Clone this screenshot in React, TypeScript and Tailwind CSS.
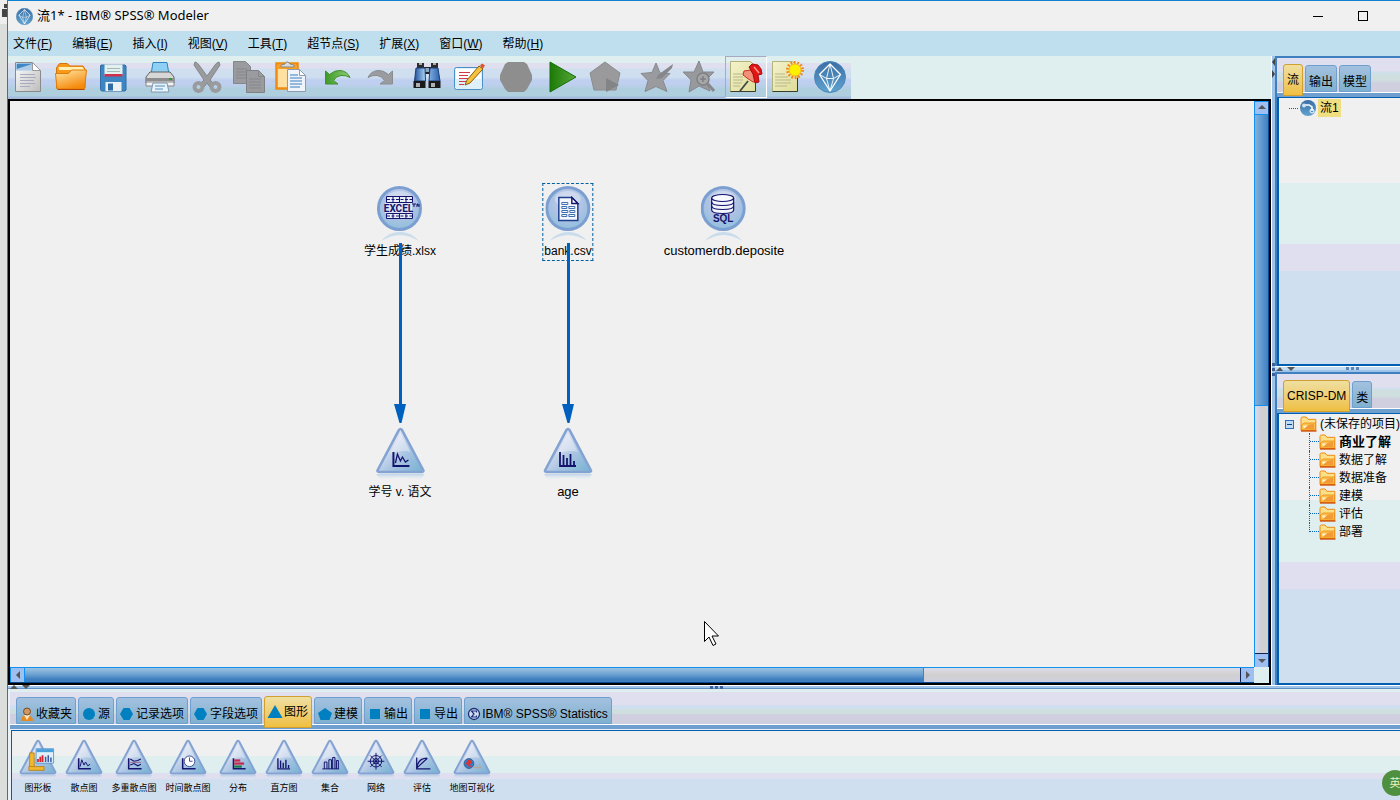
import React, { useState } from "react";
import clsx from "clsx";

const menus = [
  { label: "文件", key: "F" },
  { label: "编辑", key: "E" },
  { label: "插入", key: "I" },
  { label: "视图", key: "V" },
  { label: "工具", key: "T" },
  { label: "超节点", key: "S" },
  { label: "扩展", key: "X" },
  { label: "窗口", key: "W" },
  { label: "帮助", key: "H" },
];

/* ---------- gradients shared by every icon ---------- */

function IconDefs() {
  return (
    <svg width="0" height="0" className="absolute" aria-hidden="true">
      <defs>
        <linearGradient id="tri" x1="0" y1="0" x2="1" y2="1">
          <stop offset="0.2" stopColor="#eceaf6" />
          <stop offset="0.6" stopColor="#a9c4e2" />
          <stop offset="1" stopColor="#74b0d2" />
        </linearGradient>
        <radialGradient id="ball" cx="0.5" cy="0.35" r="0.6">
          <stop offset="0" stopColor="#cdd0ea" />
          <stop offset="0.7" stopColor="#a9c1e2" />
          <stop offset="1" stopColor="#96c0de" />
        </radialGradient>
        <linearGradient id="fade" x1="0" y1="0" x2="0" y2="1">
          <stop offset="0" stopColor="#a8c8e4" stopOpacity="0.7" />
          <stop offset="1" stopColor="#ffffff" stopOpacity="0" />
        </linearGradient>
        <linearGradient id="gem" x1="0" y1="0" x2="0" y2="1">
          <stop offset="0" stopColor="#3a6ea5" />
          <stop offset="1" stopColor="#5fa3d0" />
        </linearGradient>
        <linearGradient id="orange" x1="0" y1="0" x2="0.5" y2="1">
          <stop offset="0" stopColor="#ffe9a8" />
          <stop offset="1" stopColor="#f58a0c" />
        </linearGradient>
        <linearGradient id="sheet" x1="0" y1="0" x2="1" y2="1">
          <stop offset="0" stopColor="#ffffff" />
          <stop offset="1" stopColor="#bcbcbc" />
        </linearGradient>
        <linearGradient id="note" x1="0" y1="0" x2="1" y2="1">
          <stop offset="0" stopColor="#f4f3cc" />
          <stop offset="1" stopColor="#dedc98" />
        </linearGradient>
        <linearGradient id="play" x1="0" y1="0" x2="1" y2="0">
          <stop offset="0" stopColor="#1c7a06" />
          <stop offset="1" stopColor="#56a838" />
        </linearGradient>
        <linearGradient id="leaf" x1="0" y1="0" x2="1" y2="0">
          <stop offset="0" stopColor="#3f9a26" />
          <stop offset="1" stopColor="#8ccc74" />
        </linearGradient>
        <linearGradient id="tube" x1="0" y1="0" x2="1" y2="0">
          <stop offset="0" stopColor="#1f4e96" />
          <stop offset="0.4" stopColor="#a4cdf4" />
          <stop offset="1" stopColor="#2b62ae" />
        </linearGradient>
      </defs>
    </svg>
  );
}

function GemIcon({ size }: { size: number }) {
  return (
    <svg width={size} height={size} viewBox="0 0 32 32" fill="none" stroke="#fff" strokeWidth="1.3">
      <circle cx="16" cy="16" r="15.5" fill="url(#gem)" stroke="#4d86ba" strokeWidth="1" />
      <path d="M16 3 5.500 13.500 16 30 26.500 13.500z" strokeLinejoin="round" />
      <path d="M5.500 13.500 12.500 17.500 19.500 17.500 26.500 13.500M16 3 12.500 17.500 16 30 19.500 17.500 16 3" strokeWidth="0.900" />
    </svg>
  );
}

function FolderIcon() {
  return (
    <svg width="17" height="16" viewBox="0 0 17 16" className="shrink-0">
      <path d="M1 14.500V2.500Q1 1 2.500 1h3.500l2 2.300h7.800v11.200z" fill="#fbe08a" stroke="#ee8a12" />
      <path d="M4 7h11.500v7H1.500V9z" fill="#f9c04c" stroke="#ef8c10" strokeWidth="0.800" />
      <path d="M4 13q3-5 10-5v5z" fill="#f08a2c" opacity="0.700" />
      <path d="M3 9.500h5l-4 3z" fill="#fff3c8" />
      <path d="M1 15h15.500" stroke="#cc4a06" strokeWidth="1.300" />
    </svg>
  );
}

const gray = "#999b9e";

const tools: Record<string, React.ReactNode> = {
  新建: (
    <>
      <path d="M2.500 1.500h17l8 8v21h-25z" fill="url(#sheet)" stroke="#8a8a8a" />
      <path d="M3.500 2.500h15.500v7H3.500z" fill="#3f86c6" />
      <path d="M3.500 8 19 3v7H3.500z" fill="#dceaf6" opacity="0.7" />
      <path d="M19.500 1.500v8h8z" fill="#fff" stroke="#999" />
      <path d="M7 13.500h15M7 16.500h16M7 19.500h14M7 22.500h15M7 25.500h10" stroke="#a9a9bf" />
    </>
  ),
  打开: (
    <>
      <path d="M1.500 27V7l2-3.500L5 2.500h7l3 2.500h13l2 3v19z" fill="#f79a1c" stroke="#d97208" />
      <path d="M3.500 6h24l2 3H4z" fill="#fff1b4" />
      <path d="M.500 12.500h13l3-3.500h15l-2 19H2z" fill="url(#orange)" stroke="#e07c08" />
      <path d="M2.500 28.500h27" stroke="#b84c05" />
    </>
  ),
  保存: (
    <>
      <path d="M4 4h24l1 1v24l-1 1H4.500L3.500 28.500V5z" fill="#3e86c2" stroke="#2f6ca4" />
      <path d="M7.500 3.500h18v11h-18z" fill="#e4f0ee" />
      <path d="M10 7.500h13M10 10.500h13" stroke="#9fbcb8" />
      <path d="M7.500 13h18v2.500h-18z" fill="#d0304c" />
      <path d="M8.500 21h16v9h-16z" fill="#eef1f4" />
      <path d="M11 22.500h5v7h-5z" fill="#2f6ca4" />
    </>
  ),
  打印: (
    <>
      <path d="M9 1.500h14l2 12H7z" fill="#8fd0f4" stroke="#2f84c0" />
      <path d="M6 11h20l4 5v6H2v-6z" fill="#d7d7d7" stroke="#606060" />
      <path d="M2 17h28v3H2z" fill="#8c8c8c" />
      <path d="M2 21h28v4H2z" fill="#f2f2f2" stroke="#888" />
      <path d="M9 22h14l2 9H7z" fill="#e9f3fb" stroke="#7d98ae" />
      <path d="M11 25h10M11 28h8" stroke="#4d8fc0" />
      <path d="M25 18h3" stroke="#2ca02c" strokeWidth="2" />
    </>
  ),
  剪切: (
    <>
      <path d="M4 1q2 0 4 3l8 11 8-11q2-3 4-3l1 3-10 15 4 4-4 3-3-4-3 4-4-3 4-4L3 4z" fill={gray} stroke="#85878a" />
      <ellipse cx="7.500" cy="26" rx="4" ry="4" fill="none" stroke={gray} strokeWidth="4" />
      <ellipse cx="24.500" cy="26" rx="4" ry="4" fill="none" stroke={gray} strokeWidth="4" />
    </>
  ),
  复制: (
    <>
      <path d="M.500.500h12l5 5v17H.500z" fill={gray} stroke="#85878a" />
      <path d="M3 8h11M3 11h11M3 14h11M3 17h10" stroke="#85878a" />
      <path d="M13.500 9.500h12l6 6v16h-18z" fill={gray} stroke="#808285" />
      <path d="M25.500 9.500v6h6M16 18h12M16 21h12M16 24h12M16 27h12" stroke="#85878a" fill="none" />
    </>
  ),
  粘贴: (
    <>
      <path d="M1.500 2.500h21v25h-21z" fill="#ffe0a0" stroke="#f08a10" strokeWidth="2.500" />
      <path d="M3 4h18v4H3z" fill="#f8a01e" />
      <path d="M6 6V4l4-1q1-3 3-2l2 2 4 1v2z" fill="#d8dadc" stroke="#888" />
      <path d="M12.500 8.500h12l6 6v16h-18z" fill="#eef4fa" stroke="#8b9bb0" />
      <path d="M24.500 8.500v6h6z" fill="#fff" stroke="#8b9bb0" />
      <path d="M15 14h8M15 17h12M15 20h12M15 23h12M15 26h10" stroke="#3a7ec0" />
    </>
  ),
  撤销: <path d="M3.500 10v13H16l-4.500-3.500Q14 15 19 14.500t9 2Q25 10 18 9.500q-5-.500-10.500 4z" fill="url(#leaf)" stroke="#3f8f2c" />,
  重做: <path d="M28.500 10v13H16l4.500-3.500Q18 15 13 14.500t-9 2Q7 10 14 9.500q5-.500 10.500 4z" fill={gray} stroke="#8a8c8f" />,
  查找: (
    <>
      <path d="M12 6h8v7h-8z" fill="#222" />
      <path d="M14 7h4v4h-4z" fill="#8fa6bf" />
      <path d="M6 2h7v5H6zM20 2h7v5h-7z" fill="#2c2c2c" />
      <path d="M5 7h9l.5 13H3.500zM19 7h8l2 13H18z" fill="url(#tube)" stroke="#1b3f78" />
      <path d="M2.500 20h12v7h-12zM17.500 20h12v7h-12z" fill="#1a1a1a" />
      <path d="M5 22h4v4H5zM20 22h4v4h-4z" fill="#b0b0b0" />
      <path d="M8 3h3M22 3h3" stroke="#aaa" strokeWidth="2" />
    </>
  ),
  编辑注释: (
    <>
      <rect x="1.500" y="6.500" width="28" height="22" rx="2" fill="#e0f0f8" stroke="#4a90c4" />
      <path d="M3 8h25v10H3z" fill="#fff" />
      <path d="M6 11.500h11M6 14.500h9M6 17.500h9M6 20.500h7M6 23.500h5" stroke="#d03a4a" strokeWidth="1.200" />
      <path d="m14 19 12-14 4 3-13 14-5 2z" fill="#f6c23c" stroke="#8a5a12" />
      <path d="m27 4.500 2-2 3 2-2 3z" fill="#d9532c" />
    </>
  ),
  停止: <path d="M8 1h16l3 2 5 11v5l-5 9-3 3H8l-3-3-5-9v-5L5 3z" fill="#8e8e8e" />,
  运行: <path d="M3 1v30l26-15z" fill="url(#play)" stroke="#16700a" />,
  运行选定: (
    <>
      <path d="m16 1 15 11-4 17H5L1 12z" fill="#9a9a9c" stroke="#8a8c8e" />
      <path d="M17 17v14l13-7z" fill="#828486" />
    </>
  ),
  星标: (
    <>
      <path d="m15 2 4 10 10 .5-7 7 4 11-11-5-11 5 3-11-7-7 11-1z" fill={gray} stroke="#87898c" />
      <path d="M32 3 17 14l-2 4 6-1L31 7z" fill="#85878a" />
    </>
  ),
  查找星标: (
    <>
      <path d="m16 0 4 11h11l-8 8 4 11-11-5-10 6 2-12-8-8h11z" fill="#98999c" stroke="#86888b" />
      <circle cx="20" cy="18" r="6" fill="#a5a6a8" stroke="#7e8083" strokeWidth="1.500" />
      <path d="M17 18h6M20 15v6" stroke="#7e8083" strokeWidth="1.500" />
      <path d="m24 22 7 8" stroke="#85878a" strokeWidth="3" />
    </>
  ),
  显示注释: (
    <>
      <path d="M.500.500h20l5 5v25H.500z" fill="url(#note)" stroke="#b3b17c" />
      <path d="M25.500 20v10.500H.500" fill="none" stroke="#3d3d2c" />
      <path d="M3 13h11M3 16h10M3 19h10M3 22h9M3 25h7" stroke="#b9b78a" />
      <path d="M18 20 10 30" stroke="#444" strokeWidth="1.800" />
      <path d="m14 10 7-1 4 5 2 6-4 1-6-4-4-3z" fill="#f2907a" stroke="#c83020" />
      <path d="m22 3 6 1 3 4 1 5-4 1 1 7-4 1-2-9-4-7z" fill="#e31616" stroke="#a80d0d" />
      <path d="m24 6 5 6" stroke="#ff9a8a" strokeWidth="1.500" />
    </>
  ),
  插入注释: (
    <>
      <path d="M.500.500h20l5 5v25H.500z" fill="url(#note)" stroke="#b3b17c" />
      <path d="M25.500 17v13.500H.500" fill="none" stroke="#3d3d2c" />
      <path d="M3 13h10M3 16h13M3 19h16M3 22h16M3 25h12" stroke="#b9b78a" />
      <circle cx="23" cy="9" r="7.500" fill="none" stroke="#f08a1c" strokeWidth="3" strokeDasharray="1.800 1.600" />
      <circle cx="23" cy="9" r="6" fill="#fff000" stroke="#f4b81c" />
    </>
  ),
};

// toolbar buttons in the order they appear, one array per group
const toolGroups: string[][] = [
  ["新建", "打开", "保存"],
  ["打印"],
  ["剪切", "复制", "粘贴"],
  ["撤销", "重做"],
  ["查找", "编辑注释"],
  ["停止"],
  ["运行", "运行选定"],
  ["星标", "查找星标"],
  ["显示注释", "插入注释", "Modeler"],
];

/* ---------- node glyphs, drawn in the 50x56 triangle box ---------- */

const navy = "#14146e";

const glyphs: Record<string, React.ReactNode> = {
  board: (
    <>
      <path d="M14 18h6v22h-6z" fill="#f0b82c" stroke="#b9780c" />
      <path d="M13 36h20v5H13z" fill="#f0b82c" stroke="#b9780c" />
      <path d="M22.500 12.500h23v19h-23z" fill="#dff0fa" stroke="#3f86c6" />
      <path d="M23 13h22v4H23z" fill="#4aa0dc" />
      <path d="M25 26v4M28 23v7M31 21v9" stroke="#d3242e" strokeWidth="2.400" />
      <path d="M35 30v-7M38.500 30v-9M42 30v-6" stroke="#3a5aa8" strokeWidth="2" />
    </>
  ),
  plot: (
    <>
      <path d="M18 25v14h16" fill="none" stroke={navy} strokeWidth="2" />
      <path d="m20 36 2-9 3 7 2-4 3 5 3-2" fill="none" stroke={navy} strokeWidth="1.300" />
    </>
  ),
  multi: (
    <>
      <path d="M18 25v14h17" fill="none" stroke={navy} strokeWidth="2" />
      <path d="m20 26 5 3 5-1 4-2M20 34l5-2 5 3 4-2" fill="none" stroke={navy} strokeWidth="1.500" />
      <path d="M20 30.500h14" stroke="#a05080" />
    </>
  ),
  time: (
    <>
      <path d="M18 25v14h17" fill="none" stroke={navy} strokeWidth="2" />
      <circle cx="27" cy="29" r="7" fill="#fff" stroke="#3d4c90" strokeWidth="1.300" />
      <path d="M27 24v5h4" fill="none" stroke={navy} />
    </>
  ),
  dist: (
    <>
      <path d="M19 25v14h16" fill="none" stroke={navy} strokeWidth="2" />
      <path d="M20 28h8" stroke="#c8284c" strokeWidth="3" />
      <path d="M20 32h13" stroke="#c8284c" strokeWidth="3" />
      <path d="M20 36h10" stroke="#1e7a4c" strokeWidth="3" />
    </>
  ),
  hist: (
    <path d="M17 25v14h16M20.500 28v10M24 31v7M27.500 27v11M31 34v4" fill="none" stroke={navy} strokeWidth="1.800" />
  ),
  set: (
    <path d="M17.500 39v-9h3.500v9M23.500 39V27h3.500v12M28.500 39V24h3v15M33.500 39V28h2.500v11M15 39h22" fill="none" stroke={navy} strokeWidth="1.300" />
  ),
  web: (
    <g fill="none" stroke={navy} strokeWidth="1.300">
      <circle cx="25" cy="29" r="7.500" />
      <circle cx="25" cy="29" r="3.500" />
      <path d="M25 18v22M14 29h22M17.500 21.500l15 15M32.500 21.500l-15 15" />
    </g>
  ),
  eval: (
    <path d="M18 24v15h18M18 38l14-13M18 38q2-13 14-13" fill="none" stroke={navy} strokeWidth="1.600" />
  ),
  map: (
    <>
      <circle cx="21" cy="32" r="6.500" fill="#3a78c0" stroke="#25568f" />
      <path d="m20 27 4 1 1 3-3 2 2 4-3-1-4-4z" fill="#e03030" />
      <path d="M29 37v-6M32 37v-4M35 37v-6" stroke="#9ab4d0" strokeWidth="2" />
      <path d="M27 37.500h10" stroke="#d8905c" />
    </>
  ),
};

function TriangleIcon({ glyph, className }: { glyph: string; className: string }) {
  return (
    <svg viewBox="0 0 50 56" className={className}>
      <path d="M1 47h48l-5 8Q25 46 6 55z" fill="url(#fade)" />
      <path d="M2 43.500 23.500 3q1.500-2 3 0L48 43.500q0 1.500-2 1.500H4q-2 0-2-1.500z" fill="url(#tri)" stroke="#83a3d3" strokeWidth="2.600" />
      <path d="M25 6 35 25Q26 22 14 27z" fill="#fff" opacity="0.350" />
      {glyphs[glyph]}
    </svg>
  );
}

function CircleNodeIcon({ children }: { children: React.ReactNode }) {
  return (
    <svg viewBox="0 0 46 56" className="h-14 w-[46px]">
      <path d="M4 55Q12 46 23 46T42 55Q32 49 23 49T4 55z" fill="#c9dcec" />
      <circle cx="22.500" cy="22.500" r="21" fill="url(#ball)" stroke="#7c9fd2" strokeWidth="3" />
      <ellipse cx="22.500" cy="13" rx="13" ry="8" fill="#fff" opacity="0.300" />
      {children}
    </svg>
  );
}

const excelGlyph = (
  <>
    <path d="M9.500 10.500h26v6h-26zM9.500 27.500h26v5h-26z" fill="#e8eef8" stroke={navy} />
    <path d="M10 13.500h26M10 30h26" stroke={navy} strokeDasharray="3 1.500" />
    <path d="M16 11v6M22.500 11v6M29 11v6M16 27v6M22.500 27v6M29 27v6" stroke={navy} />
    <path d="M8 17h27v10H8z" fill="#dfe6f4" />
    <text x="21.500" y="26" textAnchor="middle" fontSize="10" fontWeight="700" fill={navy} fontFamily="Roboto, sans-serif">
      EXCEL
    </text>
    <path d="M35 18h4M37 18v3M40 21v-3h1v2M42 18v3" stroke={navy} fill="none" />
  </>
);

const fileGlyph = (
  <>
    <path d="M13.500 11.500h13l6 6v17h-19z" fill="#f4f8fd" stroke="#1f3f8f" strokeWidth="1.500" />
    <path d="M26.500 11.500v6h6z" fill="#fff" stroke={navy} strokeWidth="1.400" />
    <path d="M16.500 16.500h6v2h-6zM16.500 20.500h5v2h-5zM23.500 20.500h6v2h-6zM16.500 24.500h6v2h-6zM24.500 24.500h5v2h-5zM16.500 28.500h5v2h-5zM23.500 28.500h6v2h-6z" fill="none" stroke="#3f6fb0" />
  </>
);

const sqlGlyph = (
  <>
    <path d="M11 12v12q0 3.500 11 3.500T33 24V12" fill="#f2f5fc" stroke={navy} strokeWidth="1.200" />
    <ellipse cx="22" cy="12" rx="11" ry="3.500" fill="#f8f9fe" stroke={navy} strokeWidth="1.200" />
    <path d="M11 16q0 3.500 11 3.500T33 16M11 20q0 3.500 11 3.500T33 20" fill="none" stroke={navy} strokeWidth="1.200" />
    <text x="22.500" y="36" textAnchor="middle" fontSize="10" fontWeight="700" fill={navy} fontFamily="Liberation Sans, sans-serif">
      SQL
    </text>
  </>
);

/* ---------- window parts ---------- */

function TitleBar() {
  return (
    <header className="flex h-[30px] shrink-0 items-center bg-[#f0f0f0] pl-2 font-['Noto_Sans','Noto_Sans_CJK_SC',sans-serif]">
      <GemIcon size={17} />
      <h1 className="ml-1 flex-1 text-[13px] text-black">流1* - IBM® SPSS® Modeler</h1>
      <button aria-label="最小化" className="flex h-full w-[45px] items-center justify-center">
        <span className="h-px w-[10px] bg-black" />
      </button>
      <button aria-label="最大化" className="mr-[15px] flex h-full w-[45px] items-center justify-center">
        <span className="size-[10px] border border-black" />
      </button>
    </header>
  );
}

function MenuBar() {
  return (
    <nav className="flex h-[25px] shrink-0 items-center gap-5 bg-[#bfdfef] pt-px pl-[5px]">
      {menus.map((m) => (
        <button key={m.key} className="whitespace-nowrap">
          {m.label}(<span className="underline">{m.key}</span>)
        </button>
      ))}
    </nav>
  );
}

function Toolbar() {
  return (
    <div className="flex h-[43px] shrink-0 bg-[#dfefef]">
      <div role="toolbar" className="flex items-stretch gap-[5px] bg-[linear-gradient(#dfefef_7px,#e0dfef_7px,#e0dfef_12px,#cfdfef_13px,#cfdfef_21px,#bfcfef_24px,#bfcfef_28px,#afcfdf_33px,#afcfdf_40px,#a4bcdc_41px)]">
        {toolGroups.map((group, i) => (
          <div key={i} className={clsx("flex", i === 7 && "pl-[5px]")}>
            {group.map((name) => (
              <button
                key={name}
                aria-label={name}
                className={clsx(
                  "flex w-[42px] items-center justify-center pb-px",
                  name === "显示注释" && "mb-px border border-t-[#a9a9c0] border-r-white border-b-white border-l-[#a9a9c0]"
                )}
              >
                {name === "Modeler" ? (
                  <GemIcon size={32} />
                ) : (
                  <svg width="32" height="32" viewBox="0 0 32 32" className="shrink-0 overflow-visible">
                    {tools[name]}
                  </svg>
                )}
              </button>
            ))}
          </div>
        ))}
      </div>
    </div>
  );
}

function Arrow({ dir }: { dir: "up" | "down" | "left" | "right" }) {
  const paths = {
    up: "M1 6h8L5 2z",
    down: "M1 3h8L5 7z",
    left: "M7 1v8L3 5z",
    right: "M3 1v8l4-4z",
  };
  return (
    <svg width="10" height="10" viewBox="0 0 10 10">
      <path d={paths[dir]} fill="#555" />
    </svg>
  );
}

function VerticalScrollbar() {
  return (
    <div className="flex w-[15px] shrink-0 flex-col border-r border-l border-r-[#0a4a90] border-l-[#1090f0] bg-[#d0d0d0]">
      <button aria-label="向上滚动" className="flex h-[14px] items-center justify-center border-y border-[#1090f0] bg-[#9fbff0]">
        <Arrow dir="up" />
      </button>
      <div className="flex flex-1 flex-col bg-[linear-gradient(90deg,#dcdce8,#cfcfe0_40%,#d0d0d0_45%)]">
        <div className="h-[54%] border-b border-[#1090f0] bg-[linear-gradient(90deg,#86b0d8,#5f9ad0_50%,#3f7fc0)]" />
      </div>
      <button aria-label="向下滚动" className="flex h-[14px] items-center justify-center border-t border-t-[#102050] bg-[#9fbff0]">
        <Arrow dir="down" />
      </button>
    </div>
  );
}

function HorizontalScrollbar() {
  return (
    <div className="flex h-4 shrink-0">
      <div className="flex flex-1 border-y border-t-[#1090f0] border-b-[#0a4a90] bg-[#d0d0d0]">
        <button aria-label="向左滚动" className="flex w-[15px] items-center justify-center border-x border-[#1090f0] bg-[#9fbff0]">
          <Arrow dir="left" />
        </button>
        <div className="flex flex-1 bg-[linear-gradient(#dcdce8,#d0d0d0_50%,#cfcfe0)]">
          <div className="w-[74%] border-r border-[#1090f0] bg-[linear-gradient(#9cc4e0,#6ea2d2_45%,#3f7fc0_80%)]" />
        </div>
        <button aria-label="向右滚动" className="flex w-[14px] items-center justify-center border-l border-l-[#102050] bg-[#9fbff0]">
          <Arrow dir="right" />
        </button>
      </div>
      <div className="w-[15px] bg-[#dfefef]" />
    </div>
  );
}

type NodeProps = {
  className: string;
  label: string;
  icon: React.ReactNode;
  selected?: boolean;
};

function CanvasNode({ className, label, icon, selected }: NodeProps) {
  return (
    <div
      className={clsx(
        "absolute flex -translate-x-1/2 flex-col items-center border px-px pt-[2px] whitespace-nowrap",
        selected ? "border-dashed border-[#0060a0]" : "border-transparent",
        className
      )}
    >
      {icon}
      <span className="leading-[18px]">{label}</span>
    </div>
  );
}

function Link({ className }: { className: string }) {
  return (
    <svg width="12" height="180" className={clsx("absolute", className)}>
      <path d="M5 0h3v161h4L7.500 180h-2L0 161h5z" fill="#0060c0" />
    </svg>
  );
}

function StreamCanvas() {
  return (
    <main className="flex min-h-0 flex-1 flex-col border-2 border-black">
      <div className="flex min-h-0 flex-1">
        <div className="relative min-w-0 flex-1 overflow-hidden bg-[#f0f0f0]">
          <CanvasNode className="top-[82px] left-[390px]" label="学生成绩.xlsx" icon={<CircleNodeIcon>{excelGlyph}</CircleNodeIcon>} />
          <CanvasNode className="top-[82px] left-[558px]" label="bank.csv" selected icon={<CircleNodeIcon>{fileGlyph}</CircleNodeIcon>} />
          <CanvasNode className="top-[82px] left-[714px] text-[13px]" label="customerdb.deposite" icon={<CircleNodeIcon>{sqlGlyph}</CircleNodeIcon>} />
          <CanvasNode className="top-[323px] left-[390px]" label="学号 v. 语文" icon={<TriangleIcon glyph="plot" className="h-14 w-[50px]" />} />
          <CanvasNode className="top-[323px] left-[558px] text-[13px]" label="age" icon={<TriangleIcon glyph="hist" className="h-14 w-[50px]" />} />
          <Link className="top-[142px] left-[384px]" />
          <Link className="top-[142px] left-[552px]" />
          <svg width="16" height="26" className="absolute top-[520px] left-[694px]">
            <path d="M.500.500v20l4.500-4.500 4 8.500 3-1.500-4-8h6.500z" fill="#fff" stroke="#000" />
          </svg>
        </div>
        <VerticalScrollbar />
      </div>
      <HorizontalScrollbar />
    </main>
  );
}

type TabProps = {
  active: boolean;
  onClick: () => void;
  className?: string;
  children: React.ReactNode;
};

function Tab({ active, onClick, className, children }: TabProps) {
  return (
    <button
      role="tab"
      aria-selected={active}
      onClick={onClick}
      className={clsx(
        "flex items-center rounded-t-[3px] border px-[3px] whitespace-nowrap",
        active
          ? "relative z-10 -mb-1 border-[#d09f30] bg-linear-to-b from-[#efdf9f] to-[#efbf3f]"
          : "h-[27px] border-[#6f9fcf] bg-linear-to-b from-[#a3c1df] to-[#80b0d0] pt-[7px]",
        className
      )}
    >
      {children}
    </button>
  );
}

type SidePanelProps = {
  tabs: string[];
  className: string;
  children: React.ReactNode;
};

function SidePanel({ tabs, className, children }: SidePanelProps) {
  const [active, setActive] = useState(tabs[0]);

  return (
    <section className={clsx("flex min-h-0 flex-col border-t-2 border-l-2 border-[#3f7fc0]", className)}>
      <div role="tablist" className="flex h-[35px] shrink-0 items-end gap-[2px] border-b border-b-white bg-[linear-gradient(#e0dfef_13px,#cfdfef_14px,#cfdfdf_17px,#cfdfdf_22px,#cfcfdf_25px)] pl-[6px]">
        {tabs.map((t) => (
          <Tab key={t} active={t === active} onClick={() => setActive(t)} className={t === active ? "h-8 px-1" : undefined}>
            {t}
          </Tab>
        ))}
      </div>
      <div className="h-1 shrink-0 bg-[#6f9fcf]" />
      <div className="min-h-0 flex-1 overflow-hidden border-t border-b-2 border-l-2 border-[#005fb0] bg-[linear-gradient(#f0f0f0_32%,#dfefef_32%,#dfefef_55%,#e0dfef_55%,#e0dfef_65%,#cfdfef_65%)]">
        {children}
      </div>
    </section>
  );
}

const phases = ["商业了解", "数据了解", "数据准备", "建模", "评估", "部署"];

function Sidebar() {
  return (
    <aside className="flex w-[129px] shrink-0 overflow-hidden border-l border-white">
      <div className="w-[3px] shrink-0 bg-[#9fc4ea]">
        <svg width="3" height="324">
          <path d="M3 2v8L0 6zM0 14v8l3-4z" fill="#444" />
          <path d="M0 307h3v3H0zM0 312h3v3H0zM0 317h3v3H0z" fill="#3f6098" />
        </svg>
      </div>
      <div className="flex min-w-0 flex-1 flex-col">
        <SidePanel className="flex-[310]" tabs={["流", "输出", "模型"]}>
          <div className="flex items-center pt-px pl-[10px]">
            <span className="w-[9px] border-t border-dotted border-[#0060c0]" />
            <svg width="16" height="16" viewBox="0 0 16 16" className="ml-[2px] shrink-0">
              <circle cx="8" cy="8" r="8" fill="url(#gem)" />
              <path d="M4 5h5l3 2v4" fill="none" stroke="#fff" strokeWidth="1.500" />
              <circle cx="4" cy="5.500" r="2" fill="#cfe2f2" />
              <circle cx="12" cy="11" r="2" fill="none" stroke="#fff" />
            </svg>
            <span className="ml-[2px] bg-[#f0df80] px-[2px] leading-[18px]">流1</span>
          </div>
        </SidePanel>
        <div className="flex h-[6px] shrink-0 items-center border-t border-b-2 border-t-white border-b-[#9fc4ea] bg-[#c4dcf2]">
          <svg width="84" height="4" className="shrink-0">
            <path d="M1 4h7L5 0zM12 0h8l-4 4z" fill="#555" />
            <path d="M71 0h3v3h-3zM76 0h3v3h-3zM81 0h3v3h-3z" fill="#5f86b8" />
          </svg>
        </div>
        <SidePanel className="flex-[313]" tabs={["CRISP-DM", "类"]}>
          <div className="mt-px flex h-[18px] items-center pl-[6px] whitespace-nowrap">
            <button aria-label="折叠" className="flex size-[9px] shrink-0 items-center justify-center border border-[#2f6fb8] bg-[#c0dcf4]">
              <span className="h-px w-[5px] bg-[#104080]" />
            </button>
            <span className="ml-[6px] shrink-0">
              <FolderIcon />
            </span>
            <span className="ml-[3px]">(未保存的项目)</span>
          </div>
          <ul className="pl-[30px] whitespace-nowrap">
            {phases.map((p, i) => (
              <li key={p} className="flex h-[18px] items-center">
                <span
                  className={clsx(
                    "w-[10px] border-l border-dotted border-[#0060c0]",
                    i === phases.length - 1 ? "h-[9px] self-start border-b" : "h-full"
                  )}
                >
                  {i < phases.length - 1 && <span className="block h-[9px] border-b border-dotted border-[#0060c0]" />}
                </span>
                <FolderIcon />
                <span className={clsx("ml-[3px]", i === 0 && "text-[13px] font-bold")}>{p}</span>
              </li>
            ))}
          </ul>
        </SidePanel>
      </div>
    </aside>
  );
}

const blue = "#0080c0";

const paletteTabs = [
  {
    label: "收藏夹",
    icon: (
      <>
        <path d="M1 14q0-6 6-6t6 6z" fill="#e88a24" />
        <path d="M4 8h6l-3 5z" fill="#fbe6c8" />
        <circle cx="7" cy="4.500" r="3.500" fill="#d09860" stroke="#7a4a1c" />
      </>
    ),
  },
  { label: "源", icon: <circle cx="7" cy="7" r="6" fill={blue} /> },
  { label: "记录选项", icon: <path d="M3.500 1h6L13 7l-3.500 6h-6L0 7z" fill={blue} /> },
  { label: "字段选项", icon: <path d="M3.500 1h6L13 7l-3.500 6h-6L0 7z" fill={blue} /> },
  { label: "图形", icon: <path d="M7 0l7.500 13h-15z" fill={blue} /> },
  { label: "建模", icon: <path d="m7 1 7 5-2.500 7h-9L0 6z" fill={blue} /> },
  { label: "输出", icon: <path d="M2 2h10v10H2z" fill={blue} /> },
  { label: "导出", icon: <path d="M2 2h10v10H2z" fill={blue} /> },
  {
    label: "IBM® SPSS® Statistics",
    icon: (
      <>
        <circle cx="6" cy="7" r="5.500" fill="#d4def0" stroke="#1a2f78" strokeWidth="1.300" />
        <path d="M8.500 5.500V4h-5L6 7l-2.500 3h5V8.500" fill="none" stroke="#1a2f78" strokeWidth="1.200" />
      </>
    ),
  },
];

const paletteNodes = [
  { label: "图形板", glyph: "board" },
  { label: "散点图", glyph: "plot" },
  { label: "多重散点图", glyph: "multi" },
  { label: "时间散点图", glyph: "time" },
  { label: "分布", glyph: "dist" },
  { label: "直方图", glyph: "hist" },
  { label: "集合", glyph: "set" },
  { label: "网络", glyph: "web" },
  { label: "评估", glyph: "eval" },
  { label: "地图可视化", glyph: "map" },
];

function NodePalette() {
  const [active, setActive] = useState("图形");

  return (
    <footer className="shrink-0 bg-[#e8f0f8]">
      <div className="flex h-1 items-center justify-between border-t border-b border-t-white border-b-[#6090c8] bg-[#9fc4ea]">
        <svg width="24" height="4">
          <path d="M2 4h8L6 0zM14 0h8l-4 4z" fill="#555" />
        </svg>
        <svg width="14" height="3" className="ml-[26px]">
          <path d="M0 0h3v3H0zM5 0h3v3H5zM10 0h3v3h-3z" fill="#3f6098" />
        </svg>
        <span className="w-6" />
      </div>
      <div className="pl-[2px]">
        <div role="tablist" className="flex h-9 items-end gap-[2px] border-b border-b-white bg-[linear-gradient(#dfefef_3px,#e0dfef_3px,#e0dfef_16px,#cfdfef_16px,#cfdfef_20px,#cfdfdf_20px,#cfdfdf_25px,#cfcfdf_25px)] pl-[6px]">
          {paletteTabs.map((t) => (
            <Tab key={t.label} active={t.label === active} onClick={() => setActive(t.label)} className={t.label === active ? "h-8" : undefined}>
              <svg
                width="14"
                height="14"
                viewBox="0 0 14 14"
                className={clsx("shrink-0 overflow-visible", t.label.startsWith("IBM") ? "mr-0" : "mr-[2px]")}
              >
                {t.icon}
              </svg>
              {t.label}
            </Tab>
          ))}
        </div>
        <div className="h-1 bg-[#6f9fcf]" />
        <div className="pt-px pl-px">
          <div className="flex h-[70px] items-start border-t border-l border-[#005fb0] bg-[linear-gradient(#f0f0f0_25px,#dfefef_25px,#dfefef_42px,#e0dfef_42px,#e0dfef_48px,#cfdfef_48px)] pt-2 pl-[3px]">
            {paletteNodes.map((n) => (
              <button
                key={n.label}
                className={clsx("flex flex-col items-center text-[9px] leading-[12px] whitespace-nowrap", n.label.length > 3 ? "w-[54px]" : "w-[46px]")}
              >
                <TriangleIcon glyph={n.glyph} className="h-[43px] w-[38px]" />
                {n.label}
              </button>
            ))}
          </div>
        </div>
      </div>
    </footer>
  );
}

function App() {
  return (
    <div className="relative flex h-screen overflow-hidden bg-[#f0f0f0] font-['Liberation_Sans','Noto_Sans_CJK_SC',sans-serif] text-xs text-black">
      <IconDefs />
      {/* edge of the window behind */}
      <div className="w-[7px] shrink-0 bg-[#dcdedb]">
        <svg width="7" height="24">
          <path d="M0 0h7v24H0z" fill="#eeeeee" />
          <path d="M4 4h3v4H4zM2 9h5v8H2z" fill="#444" />
        </svg>
      </div>
      <div className="flex min-w-0 flex-1 flex-col border-t border-l border-[#1080d0]">
        <TitleBar />
        <MenuBar />
        <div className="flex min-h-0 flex-1">
          <div className="flex min-w-0 flex-1 flex-col">
            <Toolbar />
            <StreamCanvas />
          </div>
          <Sidebar />
        </div>
        <NodePalette />
      </div>
      <button className="absolute -right-2 bottom-1 size-[26px] rounded-full bg-[#4f9040] text-[11px] text-[#e8f0c0]">英</button>
    </div>
  );
}

export default App;
